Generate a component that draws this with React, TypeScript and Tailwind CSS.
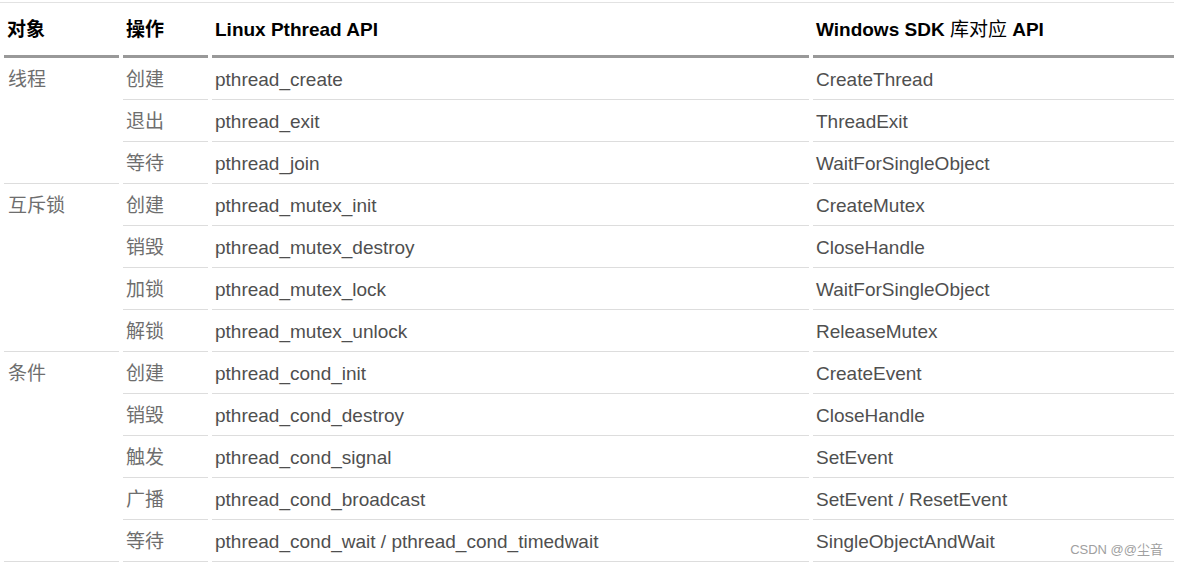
import React from 'react';

interface Group {
  obj: string;
  rows: [string, string, string][];
}

const groups: Group[] = [
  {
    obj: '线程',
    rows: [
      ['创建', 'pthread_create', 'CreateThread'],
      ['退出', 'pthread_exit', 'ThreadExit'],
      ['等待', 'pthread_join', 'WaitForSingleObject'],
    ],
  },
  {
    obj: '互斥锁',
    rows: [
      ['创建', 'pthread_mutex_init', 'CreateMutex'],
      ['销毁', 'pthread_mutex_destroy', 'CloseHandle'],
      ['加锁', 'pthread_mutex_lock', 'WaitForSingleObject'],
      ['解锁', 'pthread_mutex_unlock', 'ReleaseMutex'],
    ],
  },
  {
    obj: '条件',
    rows: [
      ['创建', 'pthread_cond_init', 'CreateEvent'],
      ['销毁', 'pthread_cond_destroy', 'CloseHandle'],
      ['触发', 'pthread_cond_signal', 'SetEvent'],
      ['广播', 'pthread_cond_broadcast', 'SetEvent / ResetEvent'],
      ['等待', 'pthread_cond_wait / pthread_cond_timedwait', 'SingleObjectAndWait'],
    ],
  },
];

const font = { fontFamily: '"Liberation Sans", Arial, "Noto Sans CJK SC", sans-serif' };

export default function App() {
  const th = 'h-[55px] border-b-[3px] border-[#999999] text-left align-middle font-bold text-black px-[3px] pt-[2px]';
  const td = 'h-[41px] border-b border-[#dddddd] align-top leading-[39px] pt-[2px] px-[3px] text-[#4f4f4f]';
  const cjk = 'text-[#6e6e6e]';

  return (
    <div className="relative w-[1179px] h-[565px] bg-white overflow-hidden text-[19px]" style={font}>
      <div className="h-[2px]" />
      <div className="w-[1174px] h-px bg-[#e2e2e2]" />
      <table className="border-separate border-spacing-x-1 border-spacing-y-0 table-fixed w-[1178px]">
        <colgroup>
          <col className="w-[115px]" />
          <col className="w-[85px]" />
          <col className="w-[597px]" />
          <col className="w-[361px]" />
        </colgroup>
        <thead>
          <tr>
            <th className={th}>对象</th>
            <th className={th}>操作</th>
            <th className={th}>Linux Pthread API</th>
            <th className={th}>
              Windows SDK <span className="font-normal">库对应</span> API
            </th>
          </tr>
        </thead>
        <tbody>
          {groups.map((g) =>
            g.rows.map((r, i) => (
              <tr key={g.obj + i}>
                {i === 0 && (
                  <td rowSpan={g.rows.length} className={`${td} ${cjk} pl-[4px]`}>
                    {g.obj}
                  </td>
                )}
                <td className={`${td} ${cjk}`}>{r[0]}</td>
                <td className={td}>{r[1]}</td>
                <td className={td}>{r[2]}</td>
              </tr>
            ))
          )}
        </tbody>
      </table>
      <div className="absolute right-[16px] top-[540px] text-[13px] text-[#a0a0a0]">CSDN @@尘音</div>
    </div>
  );
}
